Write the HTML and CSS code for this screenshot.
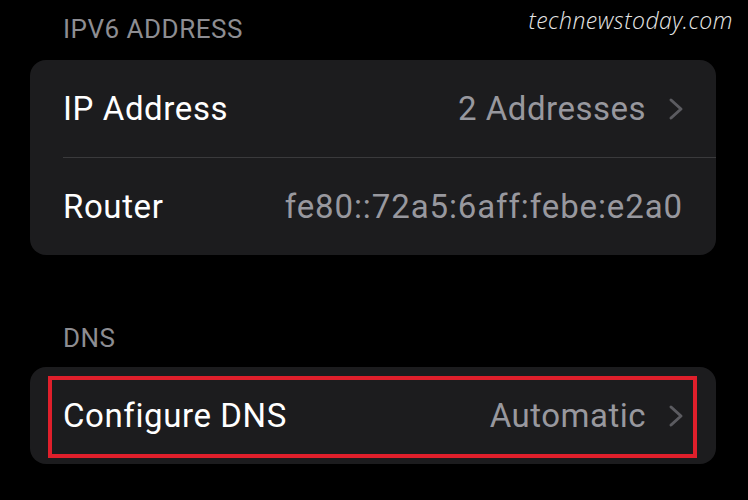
FILE: index.html
```html
<!DOCTYPE html>
<html>
<head>
<meta charset="utf-8">
<link rel="stylesheet" href="styles.css">
</head>
<body>
<div class="page">
  <div class="watermark">technewstoday.com</div>
  <div class="section-head first">IPV6 ADDRESS</div>
  <div class="card">
    <div class="row">
      <span class="label">IP Address</span>
      <span class="value">2 Addresses</span>
      <svg class="chev" width="16" height="24" viewBox="0 0 16 24"><path d="M3 3 L13 12 L3 21" fill="none" stroke="#5b5b60" stroke-width="3" stroke-linecap="round" stroke-linejoin="round"/></svg>
    </div>
    <div class="sep"></div>
    <div class="row">
      <span class="label">Router</span>
      <span class="value router">fe80::72a5:6aff:febe:e2a0</span>
    </div>
  </div>
  <div class="section-head second">DNS</div>
  <div class="card dns">
    <div class="row">
      <span class="label">Configure DNS</span>
      <span class="value">Automatic</span>
      <svg class="chev" width="16" height="24" viewBox="0 0 16 24"><path d="M3 3 L13 12 L3 21" fill="none" stroke="#5b5b60" stroke-width="3" stroke-linecap="round" stroke-linejoin="round"/></svg>
    </div>
    <div class="highlight"></div>
  </div>
</div>
</body>
</html>
```
FILE: styles.css
```css
* { box-sizing: border-box; }
html, body { margin: 0; background: #000; }
body { font-family: Roboto, "Noto Sans", sans-serif; color: #fff; }
.page {
  position: relative;
  width: 748px;
  height: 500px;
  padding: 0 32px 0 30px;
  display: flex;
  flex-direction: column;
  overflow: hidden;
}
.watermark {
  position: absolute;
  top: 4px;
  right: 15px;
  font-family: "Open Sans", sans-serif;
  font-style: italic;
  font-weight: 300;
  font-size: 23px;
  color: #e6e6e6;
  letter-spacing: 0.5px;
}
.section-head {
  font-size: 26px;
  color: #8d8d92;
  padding-left: 33px;
  height: 30px;
  line-height: 30px;
  letter-spacing: 0.5px;
}
.section-head.first { margin-top: 14px; margin-bottom: 16px; }
.section-head.second { margin-top: 68px; margin-bottom: 14px; }
.card {
  position: relative;
  background: #1c1c1e;
  border-radius: 16px;
  display: flex;
  flex-direction: column;
}
.row {
  height: 97px;
  display: flex;
  align-items: center;
  padding-left: 33px;
  padding-right: 32px;
  font-size: 33px;
}
.label { flex: 1; color: #fff; letter-spacing: 0.6px; }
.value { color: #98989e; letter-spacing: 0.5px; }
.value.router { letter-spacing: 0.9px; margin-right: 1px; }
.row .chev { margin-left: 22px; margin-top: 1px; }
.sep {
  height: 1px;
  background: #3a3a3c;
  margin-left: 33px;
}
.highlight {
  position: absolute;
  left: 18px;
  top: 9px;
  right: 19px;
  bottom: 6px;
  border: 4px solid #df1f2b;
}
```
